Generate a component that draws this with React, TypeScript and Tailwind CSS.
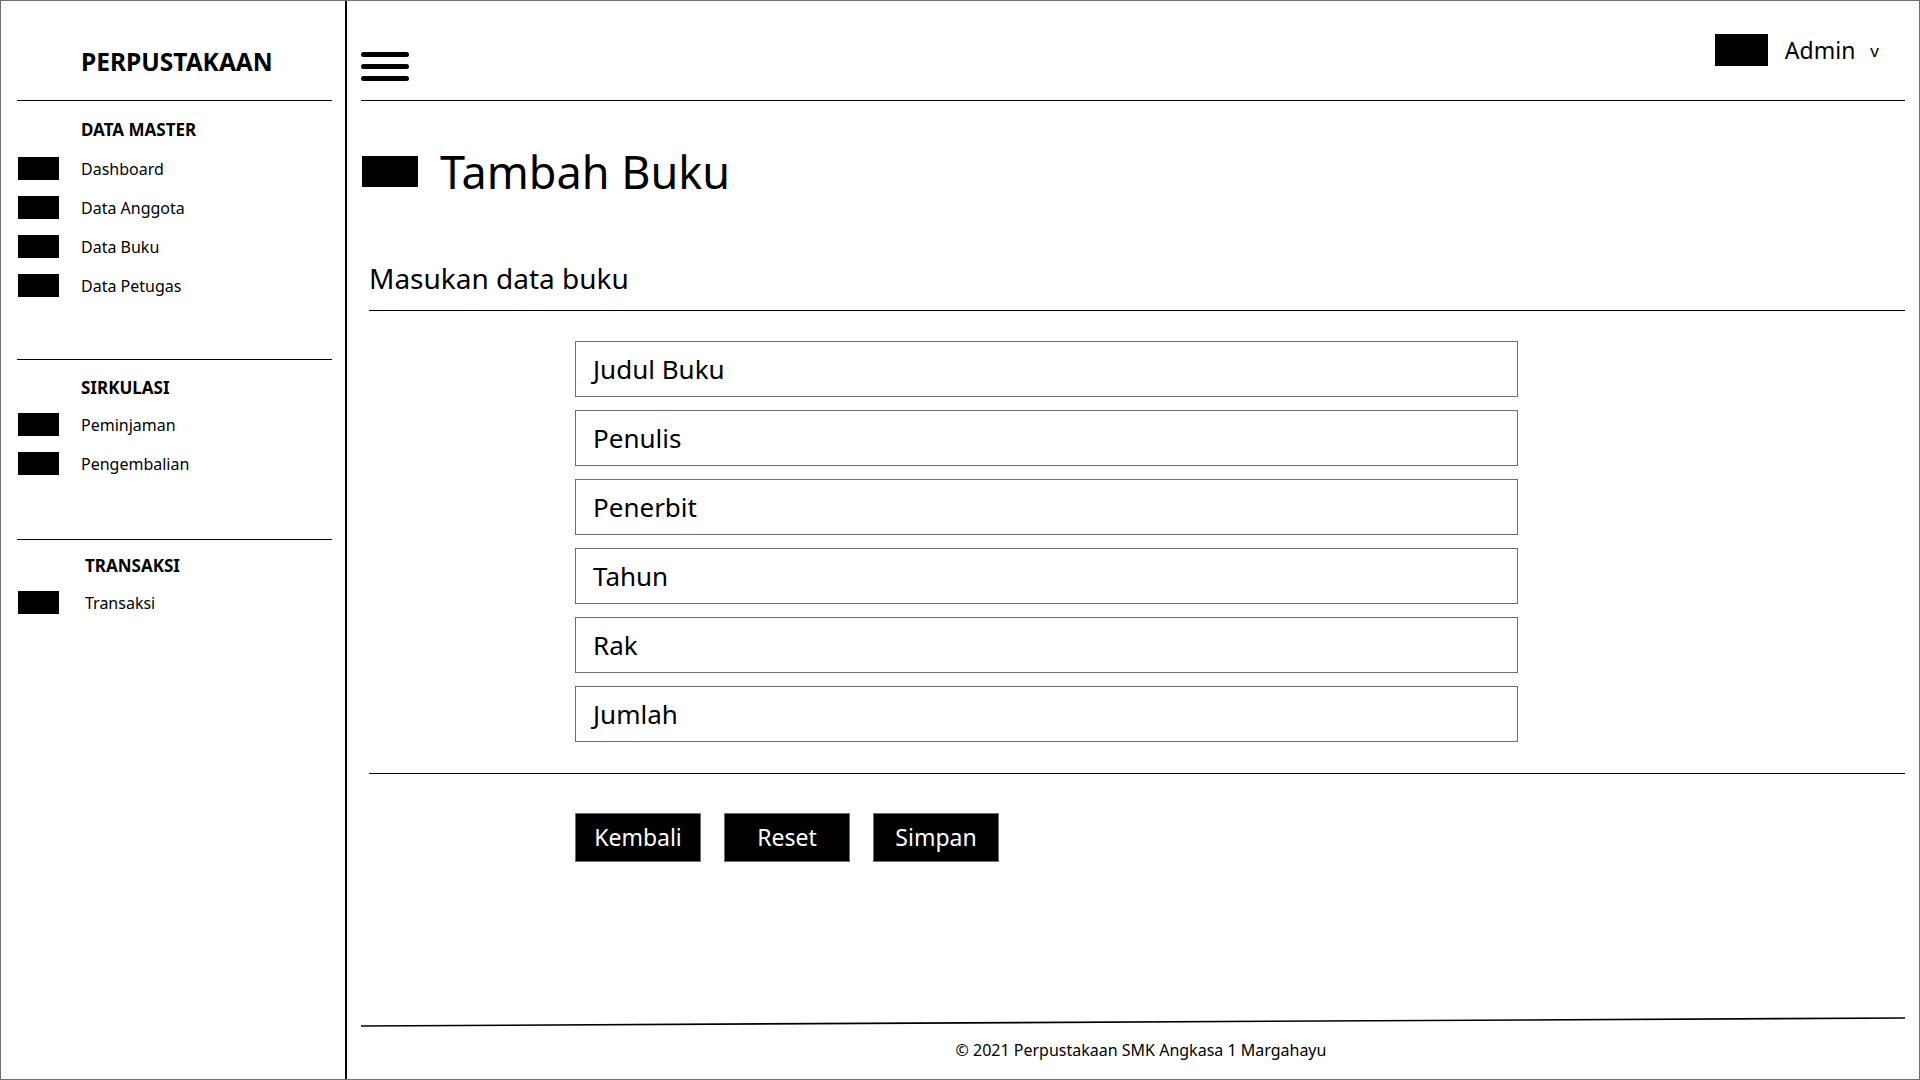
import React from 'react'

const masterMenu = ['Dashboard', 'Data Anggota', 'Data Buku', 'Data Petugas']
const sirkulasiMenu = ['Peminjaman', 'Pengembalian']
const fields = ['Judul Buku', 'Penulis', 'Penerbit', 'Tahun', 'Rak', 'Jumlah']
const actions = ['Kembali', 'Reset', 'Simpan']

function MenuRow({ label, indent = 'pl-[22px]' }: { label: string; indent?: string }) {
  return (
    <div className="flex h-[39px] items-center">
      <div className="h-[23px] w-[41px] bg-black" />
      <span className={`${indent} text-[16px] leading-none text-black`}>{label}</span>
    </div>
  )
}

export default function App() {
  return (
    <div className="flex h-[1080px] w-[1920px] overflow-hidden border border-[#707070] bg-white font-['Noto_Sans',sans-serif] text-black">
      {/* Sidebar */}
      <aside className="flex w-[346px] shrink-0 flex-col border-r-2 border-black">
        <div className="h-[99px] pl-[80px] pt-[45px]">
          <h1 className="text-[24.5px] font-bold leading-[32px]">PERPUSTAKAAN</h1>
        </div>

        <div className="ml-[16px] mr-[13px] h-px bg-black" />
        <div className="pl-[17px]">
          <h2 className="mt-[19px] mb-[9px] pl-[63px] text-[17px] font-bold leading-[20px]">DATA MASTER</h2>
          {masterMenu.map((item) => (
            <MenuRow key={item} label={item} />
          ))}
        </div>

        <div className="mt-[54px] ml-[16px] mr-[13px] h-px bg-black" />
        <div className="pl-[17px]">
          <h2 className="mt-[18px] mb-[7px] pl-[63px] text-[17px] font-bold leading-[20px]">SIRKULASI</h2>
          {sirkulasiMenu.map((item) => (
            <MenuRow key={item} label={item} />
          ))}
        </div>

        <div className="mt-[56px] ml-[16px] mr-[13px] h-px bg-black" />
        <div className="pl-[17px]">
          <h2 className="mt-[16px] mb-[7px] pl-[67px] text-[17px] font-bold leading-[20px]">TRANSAKSI</h2>
          <MenuRow label="Transaksi" indent="pl-[26px]" />
        </div>
      </aside>

      {/* Main */}
      <main className="flex min-w-0 flex-1 flex-col px-[14px]">
        <header className="flex h-[99px] items-start justify-between">
          <div className="mt-[51px] flex flex-col gap-[7px]">
            <div className="h-[5px] w-[48px] rounded-full bg-black" />
            <div className="h-[5px] w-[48px] rounded-full bg-black" />
            <div className="h-[5px] w-[48px] rounded-full bg-black" />
          </div>
          <div className="mt-[33px] flex items-center pr-[26px]">
            <div className="h-[32px] w-[53px] bg-black" />
            <span className="pl-[17px] text-[23px] leading-none">Admin</span>
            <span className="pl-[15px] text-[17px] leading-none">v</span>
          </div>
        </header>
        <div className="h-px bg-black" />

        <div className="mt-[48px] flex h-[44px] items-center">
          <div className="ml-px h-[31px] w-[56px] bg-black" />
          <h1 className="pl-[22px] text-[45px] leading-none">Tambah Buku</h1>
        </div>

        <section className="ml-[8px] mt-[71px]">
          <h2 className="text-[28px] leading-none">Masukan data buku</h2>
          <div className="mt-[18px] h-px bg-black" />

          <div className="mt-[30px] flex flex-col gap-[13px] pl-[206px]">
            {fields.map((field) => (
              <div
                key={field}
                className="flex h-[56px] w-[943px] items-center border border-[#6e6e6e] px-[17px] text-[26px] leading-none"
              >
                {field}
              </div>
            ))}
          </div>

          <div className="mt-[31px] h-px bg-black" />

          <div className="mt-[39px] flex gap-[23px] pl-[206px]">
            {actions.map((label) => (
              <button
                key={label}
                className="flex h-[49px] w-[126px] items-center justify-center border border-[#6e6e6e] bg-black text-[23px] leading-none text-white"
              >
                {label}
              </button>
            ))}
          </div>
        </section>

        <footer className="mt-auto pb-[19px]">
          <svg className="block h-[10px] w-full" viewBox="0 0 1543 10" preserveAspectRatio="none">
            <line x1="0" y1="9" x2="1543" y2="1" stroke="black" strokeWidth="1.6" />
          </svg>
          <p className="mt-[13px] pl-[16px] text-center text-[16px] leading-[20px]">
            © 2021 Perpustakaan SMK Angkasa 1 Margahayu
          </p>
        </footer>
      </main>
    </div>
  )
}
